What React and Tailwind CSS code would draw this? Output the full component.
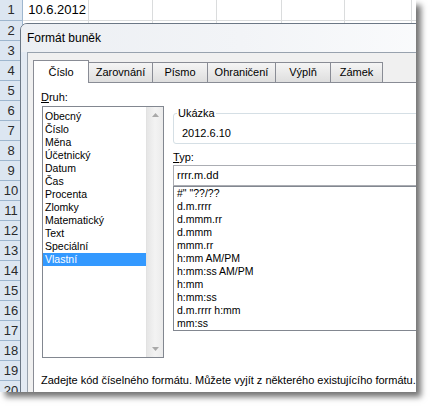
import React from "react";

const cols = ["w-[66px]", "w-[64px]", "w-[64px]", "w-[65px]", "w-[63px]", "w-[67px]", "w-[40px]"];

const druhy = [
  "Obecný",
  "Číslo",
  "Měna",
  "Účetnický",
  "Datum",
  "Čas",
  "Procenta",
  "Zlomky",
  "Matematický",
  "Text",
  "Speciální",
  "Vlastní",
];

const typy = [
  '#" "??/??',
  "d.m.rrrr",
  "d.mmm.rr",
  "d.mmm",
  "mmm.rr",
  "h:mm AM/PM",
  "h:mm:ss AM/PM",
  "h:mm",
  "h:mm:ss",
  "d.m.rrrr h:mm",
  "mm:ss",
];

const tabs = [
  { label: "Zarovnání", w: "w-[64px]" },
  { label: "Písmo", w: "w-[55px]" },
  { label: "Ohraničení", w: "w-[68px]" },
  { label: "Výplň", w: "w-[55px]" },
  { label: "Zámek", w: "w-[52px]" },
];

function Sheet() {
  return (
    <div className="flex flex-col font-['Liberation_Sans',Arial,sans-serif]">
      {Array.from({ length: 20 }, (_, i) => (
        <div key={i} className={i === 0 ? "flex h-[21px]" : "flex h-[20px]"}>
          <div className="w-[23px] shrink-0 flex items-center justify-center bg-[#dce6f1] border-r border-b border-[#9eb6ce] text-[13px] text-[#2a2a2a]">
            {i + 1}
          </div>
          {cols.map((w, c) => (
            <div
              key={c}
              className={`${w} shrink-0 border-r border-b border-[#dadcdd] bg-white flex items-center justify-end pr-[2px] text-[13px] text-black`}
            >
              {i === 0 && c === 0 ? "10.6.2012" : ""}
            </div>
          ))}
        </div>
      ))}
    </div>
  );
}

function Arrow({ down }) {
  return (
    <svg width="7" height="4" viewBox="0 0 7 4" className="block">
      {down ? (
        <polygon points="0,0 7,0 3.5,4" fill="#a9a9a9" />
      ) : (
        <polygon points="3.5,0 7,4 0,4" fill="#a9a9a9" />
      )}
    </svg>
  );
}

function Dialog() {
  return (
    <div className="absolute left-[20px] top-[23px] w-[440px] h-[400px] rounded-tl-[7px] border border-[#6b7785] bg-[#e3eaf3] flex flex-col font-['Liberation_Sans',Arial,sans-serif] text-black">
      <div className="h-[28px] shrink-0 pl-[6px] flex items-center text-[12px] rounded-tl-[6px] bg-linear-to-r from-[#eceff3] via-[#f2f4f7] to-[#fbfcfd]">
        Formát buněk
      </div>
      <div className="flex-1 ml-[6px] border-l border-t border-[#98a2ae] bg-[#f0f0f0] pl-[5px] pt-[7px] flex flex-col">
        {/* tabs */}
        <div className="flex items-end text-[11px]">
          <div className="w-[56px] h-[23px] -mb-px relative z-10 bg-white border-t border-l border-r border-[#898c95] flex items-center justify-center">
            Číslo
          </div>
          {tabs.map((t) => (
            <div
              key={t.label}
              className={`${t.w} h-[20px] border-t border-r border-[#898c95] bg-linear-to-b from-[#f5f5f5] to-[#dedede] flex items-center justify-center`}
            >
              {t.label}
            </div>
          ))}
        </div>

        {/* panel */}
        <div className="flex-1 border border-[#898c95] bg-white pl-[8px] pt-[7px]">
          <div className="flex gap-[9px]">
            <div className="flex flex-col">
              <div className="h-[14px] leading-[14px] text-[11px] -ml-px">
                <span className="underline">D</span>ruh:
              </div>
              <div className="mt-[2px] w-[122px] h-[252px] border border-[#828790] flex">
                <div className="flex-1 pt-[3px] text-[10.5px]">
                  {druhy.map((d) => (
                    <div
                      key={d}
                      className={
                        d === "Vlastní"
                          ? "h-[13px] leading-[13px] pl-[2px] bg-[#3399ff] text-white"
                          : "h-[13px] leading-[13px] pl-[2px]"
                      }
                    >
                      {d}
                    </div>
                  ))}
                </div>
                <div className="w-[17px] flex flex-col justify-between items-center py-[6px] bg-linear-to-r from-[#e6e6e6] via-[#f3f3f3] to-[#ebebeb] border-l border-[#e2e2e2]">
                  <Arrow />
                  <Arrow down />
                </div>
              </div>
            </div>

            <div className="flex-1 flex flex-col">
              <fieldset className="mt-[16px] border border-[#d5dfe5] rounded-[3px] pl-[3px] pt-[6px] pb-[3px]">
                <legend className="px-[1px] text-[11px] leading-[14px]">Ukázka</legend>
                <div className="ml-[5px] text-[11px] leading-[14px]">2012.6.10</div>
              </fieldset>
              <div className="mt-[6px] h-[14px] leading-[14px] text-[11px]">
                <span className="underline">T</span>yp:
              </div>
              <div className="mt-[1px] h-[21px] border border-[#abadb3] flex items-center pl-[3px] text-[11px]">
                rrrr.m.dd
              </div>
              <div className="h-[145px] border border-[#828790] pl-[3px] text-[10.5px]">
                {typy.map((t) => (
                  <div key={t} className="h-[13px] leading-[13px]">
                    {t}
                  </div>
                ))}
              </div>
            </div>
          </div>
          <div className="mt-[15px] -ml-px text-[11px] leading-[14px] whitespace-nowrap">
            Zadejte kód číselného formátu. Můžete vyjít z některého existujícího formátu.
          </div>
        </div>
      </div>
    </div>
  );
}

export default function App() {
  return (
    <div className="w-[431px] h-[407px] bg-white">
      <div className="w-[416px] h-[392px] relative overflow-hidden shadow-[5px_5px_6px_rgba(0,0,0,0.55)]">
        <Sheet />
        <Dialog />
      </div>
    </div>
  );
}
